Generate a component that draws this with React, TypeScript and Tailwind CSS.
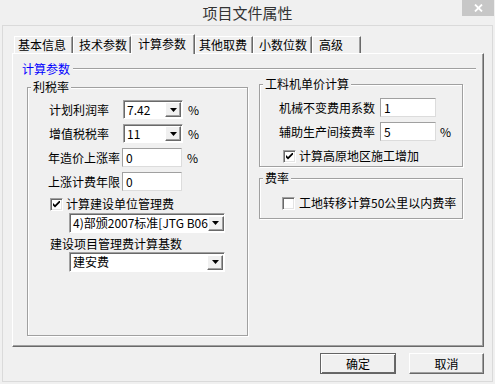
import React from 'react';

const FONT = "font-['Noto_Sans_CJK_SC','Noto_Sans',sans-serif]";

const DropBtn = () => (
  <div className="w-[16px] h-[15px] shrink-0 flex items-center justify-center bg-[#f0f0f0] border border-t-white border-l-white border-r-[#696969] border-b-[#696969] shadow-[inset_-1px_-1px_0_#a0a0a0]">
    <svg width="7" height="4" viewBox="0 0 7 4">
      <path d="M0 0h7L3.5 4z" fill="#000" />
    </svg>
  </div>
);

const Combo = ({ value, className }: { value: string; className: string }) => (
  <div className={`h-[19px] flex items-center bg-white border border-t-[#a0a0a0] border-l-[#a0a0a0] border-r-white border-b-white shadow-[inset_1px_1px_0_#696969] pl-[3px] pr-[1px] ${className}`}>
    <span className="flex-1 whitespace-nowrap text-[12px] leading-[16px]">{value}</span>
    <DropBtn />
  </div>
);

const Field = ({ value, className }: { value: string; className: string }) => (
  <div className={`h-[19px] flex items-center bg-white border border-t-[#a0a0a0] border-l-[#a0a0a0] border-r-[#dcdcdc] border-b-[#dcdcdc] pl-[3px] text-[12px] leading-[16px] ${className}`}>
    {value}
  </div>
);

const Check = ({ checked }: { checked?: boolean }) => (
  <div className="w-[13px] h-[13px] shrink-0 flex items-center justify-center bg-white border border-t-[#a0a0a0] border-l-[#a0a0a0] border-r-white border-b-white shadow-[inset_1px_1px_0_#696969,inset_-1px_-1px_0_#e3e3e3]">
    {checked && (
      <svg width="7" height="7" viewBox="0 0 7 7">
        <path d="M0 2L2 4L7 -1V1.5L2 6.5L0 4.5z" fill="#000" />
      </svg>
    )}
  </div>
);

const Group = ({ title, className, children }: { title: string; className: string; children: React.ReactNode }) => (
  <div className={`flex flex-col border border-[#a0a0a0] shadow-[inset_1px_1px_0_#fff,1px_1px_0_#fff] ${className}`}>
    <div className="-mt-[8px] ml-[3px] px-[2px] w-fit bg-[#f0f0f0] text-[12px] leading-[14px]">{title}</div>
    {children}
  </div>
);

const tabs = [
  { label: '基本信息', cls: 'w-[59px] pl-[3px]' },
  { label: '技术参数', cls: 'w-[58px] pl-[5px]' },
  { label: '计算参数', cls: 'w-[64px] pl-[6px]', active: true },
  { label: '其他取费', cls: 'w-[58px] pl-[3px]' },
  { label: '小数位数', cls: 'w-[59px] pl-[5px]' },
  { label: '高级', cls: 'w-[49px] pl-[6px]' },
];

export default function App() {
  return (
    <div className={`w-[495px] h-[384px] bg-[#f0f0f0] overflow-hidden text-black ${FONT}`}>
      {/* title bar */}
      <div className="h-[25px] grid grid-cols-[1fr_auto_1fr]">
        <div />
        <div className="text-[15px] leading-[25px] text-[#333]">项目文件属性</div>
        <div className="justify-self-end mr-[1px] w-[32px] h-[16px] bg-[#c7c7c7] flex items-center justify-center">
          <svg width="9" height="8" viewBox="0 0 9 8">
            <path d="M1 0.5L8 7.5M8 0.5L1 7.5" stroke="#fff" strokeWidth="1.8" />
          </svg>
        </div>
      </div>

      {/* frame */}
      <div className="mx-[2px] h-[357px] border border-[#dadada] flex flex-col">
        {/* tabs */}
        <div className="mt-[8px] pl-[11px] h-[19px] flex items-end">
          {tabs.map((t) =>
            t.active ? (
              <div
                key={t.label}
                className={`relative z-10 h-[20px] -mb-[1px] flex items-center pb-[2px] bg-[#f0f0f0] border-t border-l border-t-white border-l-white border-r border-r-[#696969] shadow-[inset_-1px_0_0_#a0a0a0] text-[12px] leading-[14px] ${t.cls}`}
              >
                {t.label}
              </div>
            ) : (
              <div
                key={t.label}
                className={`h-[17px] flex items-center bg-[#f0f0f0] border-t border-l border-t-white border-l-white border-r border-r-[#696969] shadow-[inset_-1px_0_0_#a0a0a0] text-[12px] leading-[14px] ${t.cls}`}
              >
                {t.label}
              </div>
            )
          )}
        </div>

        {/* panel */}
        <div className="ml-[9px] mr-[8px] h-[294px] flex flex-col border border-t-white border-l-white border-r-[#696969] border-b-[#696969] shadow-[inset_-1px_-1px_0_#a0a0a0]">
          <div className="mt-[8px] pl-[9px] pr-[7px] flex items-center">
            <span className="text-[12px] leading-[14px] text-[#0000ff]">计算参数</span>
            <div className="ml-[3px] flex-1 h-[2px] border-t border-b border-t-[#a0a0a0] border-b-white" />
          </div>

          <div className="mt-[8px] flex items-start">
            {/* left group */}
            <Group title="利税率" className="mt-[3px] ml-[14px] w-[221px] h-[249px]">
              <div className="mt-[6px] pl-[21px] flex flex-col gap-[5px] text-[12px] leading-[14px]">
                <div className="h-[19px] flex items-center">
                  <span className="w-[74px]">计划利润率</span>
                  <Combo value="7.42" className="w-[60px]" />
                  <span className="ml-[5px]">%</span>
                </div>
                <div className="h-[19px] flex items-center">
                  <span className="w-[74px]">增值税税率</span>
                  <Combo value="11" className="w-[60px]" />
                  <span className="ml-[5px]">%</span>
                </div>
                <div className="h-[19px] flex items-center">
                  <span className="w-[74px] -ml-[1px] pr-[1px] whitespace-nowrap">年造价上涨率</span>
                  <Field value="0" className="w-[60px]" />
                  <span className="ml-[5px]">%</span>
                </div>
                <div className="h-[19px] flex items-center">
                  <span className="w-[74px] -ml-[1px] pr-[1px] whitespace-nowrap">上涨计费年限</span>
                  <Field value="0" className="w-[60px]" />
                </div>
              </div>

              <div className="mt-[6px] pl-[22px] h-[14px] flex items-center text-[12px] leading-[14px]">
                <Check checked />
                <span className="ml-[3px]">计算建设单位管理费</span>
              </div>
              <Combo value="4)部颁2007标准[JTG B06" className="mt-[2px] ml-[41px] w-[156px] h-[20px]" />
              <div className="mt-[4px] pl-[22px] h-[14px] text-[12px] leading-[14px]">建设项目管理费计算基数</div>
              <Combo value="建安费" className="mt-[1px] ml-[41px] w-[156px] h-[20px]" />
            </Group>

            {/* right column */}
            <div className="ml-[11px] flex flex-col">
              <Group title="工料机单价计算" className="w-[204px] h-[83px]">
                <div className="mt-[7px] pl-[19px] flex flex-col gap-[5px] text-[12px] leading-[14px]">
                  <div className="h-[19px] flex items-center">
                    <span className="w-[101px] whitespace-nowrap">机械不变费用系数</span>
                    <Field value="1" className="w-[56px]" />
                  </div>
                  <div className="h-[19px] flex items-center">
                    <span className="w-[101px] whitespace-nowrap">辅助生产间接费率</span>
                    <Field value="5" className="w-[56px]" />
                    <span className="ml-[4px]">%</span>
                  </div>
                </div>
                <div className="mt-[8px] pl-[23px] h-[14px] flex items-center text-[12px] leading-[14px]">
                  <Check checked />
                  <span className="ml-[3px]">计算高原地区施工增加</span>
                </div>
              </Group>

              <Group title="费率" className="mt-[11px] w-[204px] h-[41px]">
                <div className="mt-[11px] pl-[22px] h-[14px] flex items-center text-[12px] leading-[14px]">
                  <Check />
                  <span className="ml-[4px]">工地转移计算50公里以内费率</span>
                </div>
              </Group>
            </div>
          </div>
        </div>

        {/* buttons */}
        <div className="mt-[6px] pr-[8px] flex justify-end gap-[13px] text-[12px] leading-[14px]">
          <button className="w-[76px] h-[21px] flex items-center justify-center bg-[#f0f0f0] border border-[#646464] shadow-[inset_1px_1px_0_#fff,inset_-1px_-1px_0_#696969]">
            确定
          </button>
          <button className="w-[75px] h-[21px] flex items-center justify-center bg-[#f0f0f0] border border-t-white border-l-white border-r-[#696969] border-b-[#696969] shadow-[inset_-1px_-1px_0_#a0a0a0]">
            取消
          </button>
        </div>
      </div>
    </div>
  );
}
